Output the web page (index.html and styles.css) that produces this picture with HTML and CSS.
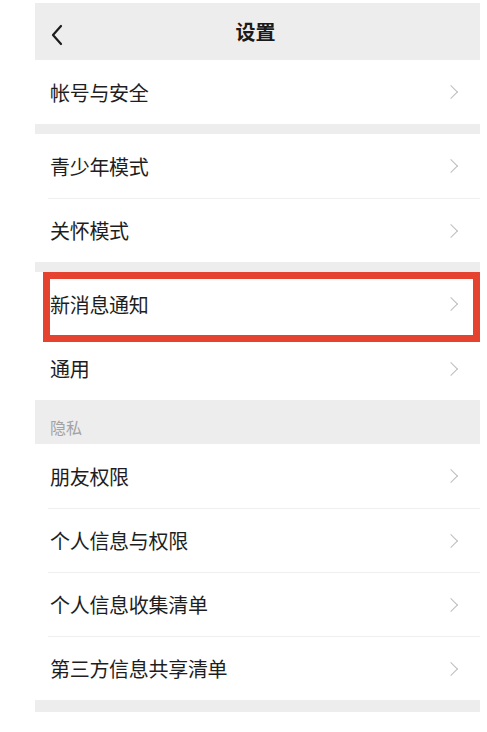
FILE: index.html
```html
<!DOCTYPE html>
<html>
    <head>
        <title>设置</title>
        <meta http-equiv="Content-Type" content="text/html; charset=UTF-8">
        <link rel="stylesheet" href="styles.css">
    </head>
    <body>
        <div class="screen">
            <div class="nav-bar">
                <svg class="back" width="14" height="22" viewBox="0 0 14 22">
                    <path d="M11 2 L3 11 L11 20" fill="none" stroke="#1c1c1c" stroke-width="2.2" stroke-linecap="round" stroke-linejoin="round"/>
                </svg>
                <div class="title">设置</div>
            </div>

            <div class="group">
                <div class="row"><div class="row-inner"><span>帐号与安全</span><i class="arrow"></i></div></div>
            </div>

            <div class="group">
                <div class="row"><div class="row-inner"><span>青少年模式</span><i class="arrow"></i></div></div>
                <div class="row"><div class="row-inner"><span>关怀模式</span><i class="arrow"></i></div></div>
            </div>

            <div class="group">
                <div class="row marked"><div class="row-inner"><span>新消息通知</span><i class="arrow"></i></div></div>
                <div class="row"><div class="row-inner"><span>通用</span><i class="arrow"></i></div></div>
            </div>

            <div class="section-label">隐私</div>

            <div class="group tight">
                <div class="row"><div class="row-inner"><span>朋友权限</span><i class="arrow"></i></div></div>
                <div class="row"><div class="row-inner"><span>个人信息与权限</span><i class="arrow"></i></div></div>
                <div class="row"><div class="row-inner"><span>个人信息收集清单</span><i class="arrow"></i></div></div>
                <div class="row"><div class="row-inner"><span>第三方信息共享清单</span><i class="arrow"></i></div></div>
            </div>

            <div class="bottom-gap"></div>
        </div>
    </body>
</html>
```

FILE: styles.css
```css
body {
    margin: 0;
    padding: 0;
    background-color: #fff;
    font-family: "Noto Sans CJK SC", "Noto Sans", sans-serif;
    color: #1e1e1e;
}

.screen {
    margin: 3px 7px 0 35px;
    background-color: #ededed;
}

.nav-bar {
    height: 57px;
    display: flex;
    align-items: center;
    justify-content: center;
    position: relative;
}

.nav-bar .back {
    position: absolute;
    left: 15px;
    top: 21px;
}

.nav-bar .title {
    font-size: 20px;
    font-weight: 700;
    color: #1a1a1a;
    margin-left: -4px;
}

.group {
    background-color: #fff;
}

.group + .group {
    margin-top: 10px;
}

.row {
    padding-left: 13px;
}

.row-inner {
    height: 64px;
    display: flex;
    align-items: center;
    justify-content: space-between;
    padding: 0 22px 0 2px;
    border-top: 1px solid #efefef;
    box-sizing: border-box;
    font-size: 20px;
    letter-spacing: -0.3px;
}

.row:first-child .row-inner {
    border-top: none;
}

.arrow {
    width: 9px;
    height: 9px;
    border-top: 1.6px solid #bdbdbd;
    border-right: 1.6px solid #bdbdbd;
    transform: rotate(45deg);
    margin-right: 2px;
}

/* red annotation box */
.row.marked {
    position: relative;
}

.row.marked::after {
    content: "";
    position: absolute;
    top: 0;
    left: 8px;
    right: 0;
    bottom: -6px;
    border: 7px solid #e5432f;
    z-index: 2;
}

.section-label {
    height: 44px;
    display: flex;
    align-items: flex-end;
    padding: 0 0 5px 15px;
    box-sizing: border-box;
    font-size: 16px;
    color: #a3a3a3;
}

.bottom-gap {
    height: 12px;
}
```
